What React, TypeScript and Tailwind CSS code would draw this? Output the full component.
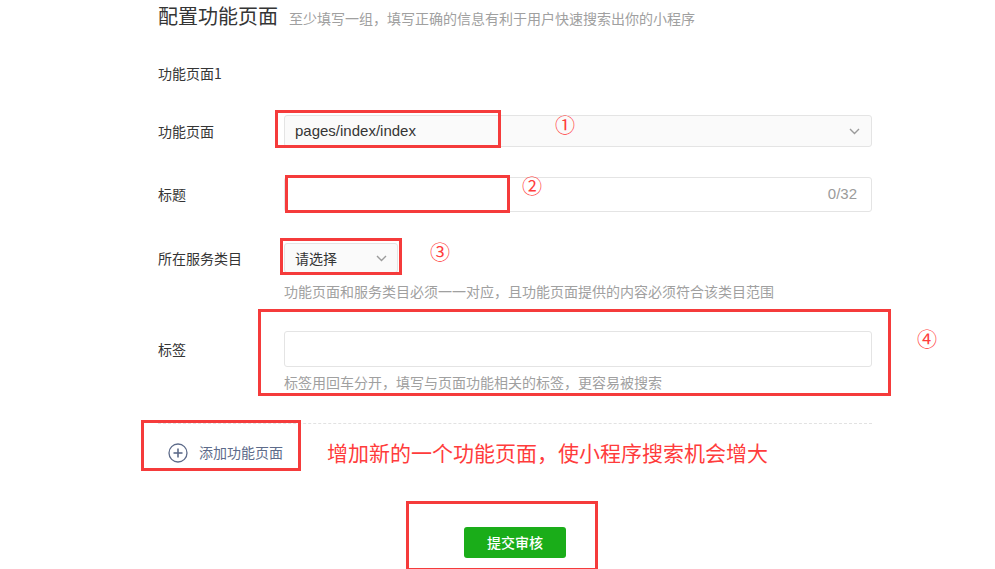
import React from 'react';

const Chevron: React.FC = () => (
  <svg width="11" height="7" viewBox="0 0 11 7" fill="none">
    <polyline points="1,1 5.5,5.5 10,1" stroke="#9b9b9b" strokeWidth="1.4" />
  </svg>
);

const Row: React.FC<{ label: string; className?: string; children: React.ReactNode }> = ({ label, className, children }) => (
  <div className={`flex items-center ${className ?? ''}`}>
    <div className="w-[126px] shrink-0 text-[14px] text-[#353535]">{label}</div>
    <div className="flex-1">{children}</div>
  </div>
);

// red markup boxes drawn over the form
const Mark: React.FC<{ className: string }> = ({ className }) => (
  <div className={`absolute border-[3px] border-[#f53b3b] ${className}`} />
);

const Num: React.FC<{ className: string; n: string }> = ({ className, n }) => (
  <div className={`absolute text-[20px] leading-none text-[#ff3c3c] font-['Liberation_Serif','Noto_Sans_CJK_SC',serif] ${className}`}>{n}</div>
);

export default function App() {
  return (
    <div className="relative w-[995px] h-[569px] overflow-hidden bg-white font-['Noto_Sans_CJK_SC','Liberation_Sans',sans-serif]">
      <div className="ml-[158px] w-[714px] pt-[4px]">
        <div className="flex items-baseline h-[24px]">
          <span className="text-[20px] leading-[24px] text-[#353535]">配置功能页面</span>
          <span className="ml-[11px] text-[14px] text-[#a0a0a0]">至少填写一组，填写正确的信息有利于用户快速搜索出你的小程序</span>
        </div>

        <div className="mt-[35px] text-[14px] leading-[20px] text-[#353535]">功能页面1</div>

        <Row label="功能页面" className="mt-[32px]">
          <div className="h-[32px] flex items-center justify-between rounded-[3px] border border-[#e4e4e4] bg-[#fafafa] pl-[10px] pr-[11px]">
            <span className="text-[15px] text-[#353535] font-['Liberation_Sans','Noto_Sans_CJK_SC',sans-serif]">pages/index/index</span>
            <Chevron />
          </div>
        </Row>

        <Row label="标题" className="mt-[30px]">
          <div className="h-[35px] flex items-center justify-end rounded-[3px] border border-[#e4e4e4] bg-white pr-[14px]">
            <span className="text-[15px] text-[#9b9b9b] font-['Liberation_Sans',sans-serif]">0/32</span>
          </div>
        </Row>

        <Row label="所在服务类目" className="mt-[31px]">
          <div className="w-[114px] h-[30px] flex items-center justify-between rounded-[3px] border border-[#e4e4e4] bg-[#fafafa] pl-[10px] pr-[10px]">
            <span className="text-[14px] text-[#353535]">请选择</span>
            <Chevron />
          </div>
        </Row>
        <div className="ml-[126px] mt-[9px] text-[14px] leading-[18px] text-[#a0a0a0]">
          功能页面和服务类目必须一一对应，且功能页面提供的内容必须符合该类目范围
        </div>

        <Row label="标签" className="mt-[31px]">
          <div className="h-[36px] rounded-[3px] border border-[#e4e4e4] bg-white" />
        </Row>
        <div className="ml-[126px] mt-[6px] text-[14px] leading-[18px] text-[#a0a0a0]">
          标签用回车分开，填写与页面功能相关的标签，更容易被搜索
        </div>

        <div className="mt-[32px] border-t border-dashed border-[#e2e2e2]" />

        <div className="mt-[13px] ml-[10px] flex items-center gap-[11px]">
          <svg width="20" height="20" viewBox="0 0 20 20" fill="none">
            <circle cx="10" cy="10" r="9" stroke="#5d6b8a" strokeWidth="1.3" />
            <line x1="10" y1="5.5" x2="10" y2="14.5" stroke="#5d6b8a" strokeWidth="1.6" />
            <line x1="5.5" y1="10" x2="14.5" y2="10" stroke="#5d6b8a" strokeWidth="1.6" />
          </svg>
          <span className="text-[14px] text-[#5d6b8a]">添加功能页面</span>
          <span className="ml-[33px] text-[21px] text-[#ff3c3c]">增加新的一个功能页面，使小程序搜索机会增大</span>
        </div>

        <div className="mt-[58px] flex justify-center">
          <button className="w-[102px] h-[31px] rounded-[3px] bg-[#1aad19] text-[14px] font-medium text-white">提交审核</button>
        </div>
      </div>

      <Mark className="left-[275px] top-[110px] w-[226px] h-[38px]" />
      <Mark className="left-[285px] top-[175px] w-[225px] h-[38px]" />
      <Mark className="left-[280px] top-[238px] w-[122px] h-[37px]" />
      <Mark className="left-[258px] top-[309px] w-[633px] h-[87px]" />
      <Mark className="left-[141px] top-[420px] w-[160px] h-[51px]" />
      <Mark className="left-[406px] top-[501px] w-[192px] h-[70px]" />

      <Num n="①" className="left-[555px] top-[116px]" />
      <Num n="②" className="left-[522px] top-[177px]" />
      <Num n="③" className="left-[430px] top-[243px]" />
      <Num n="④" className="left-[917px] top-[330px]" />
    </div>
  );
}
